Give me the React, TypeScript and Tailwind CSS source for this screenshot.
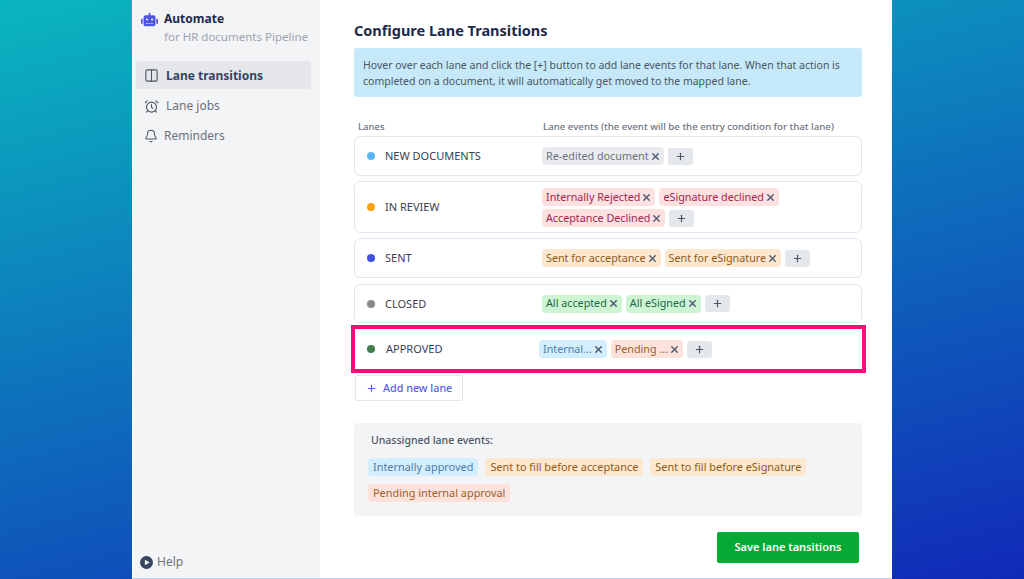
import React from 'react';
import { AlarmClock, Bell, Columns2, Plus, X } from 'lucide-react';
import { FaRobot } from 'react-icons/fa';

type Tag = { label: string; cls: string };

const gray = 'bg-[#e9ebef] text-[#6b7280]';
const red = 'bg-[#fde0e0] text-[#a0274f]';
const orange = 'bg-[#fde8cf] text-[#8e5a1a]';
const green = 'bg-[#cdf5d3] text-[#24664a]';
const blue = 'bg-[#d3eeff] text-[#4d7ea8]';
const peach = 'bg-[#fde2dc] text-[#9a5f2e]';

const lanes: { name: string; dot: string; h: string; pad?: string; tags: Tag[] }[] = [
  { name: 'NEW DOCUMENTS', dot: 'bg-[#5cb8f2]', h: 'h-[40px]', tags: [{ label: 'Re-edited document', cls: gray }] },
  {
    name: 'IN REVIEW',
    dot: 'bg-[#fba11b]',
    h: 'h-[52px]',
    pad: 'pt-[1px]',
    tags: [
      { label: 'Internally Rejected', cls: red },
      { label: 'eSignature declined', cls: red },
      { label: 'Acceptance Declined', cls: red },
    ],
  },
  {
    name: 'SENT',
    dot: 'bg-[#3f51e0]',
    h: 'h-[40px]',
    tags: [
      { label: 'Sent for acceptance', cls: orange },
      { label: 'Sent for eSignature', cls: orange },
    ],
  },
  {
    name: 'CLOSED',
    dot: 'bg-[#8a8a8a]',
    h: 'mt-[1px] h-[39px]',
    tags: [
      { label: 'All accepted', cls: green },
      { label: 'All eSigned', cls: green },
    ],
  },
];

const unassigned: Tag[] = [
  { label: 'Internally approved', cls: blue },
  { label: 'Sent to fill before acceptance', cls: orange },
  { label: 'Sent to fill before eSignature', cls: orange },
  { label: 'Pending internal approval', cls: peach },
];

const Chip = ({ tag }: { tag: Tag }) => (
  <span className={`inline-flex h-[18px] items-center rounded-[4px] pl-[4px] pr-[3px] text-[10.75px] leading-none ${tag.cls}`}>
    <span>{tag.label}</span>
    <X className="ml-[1px] h-[11px] w-[11px] text-[#4b5870]" strokeWidth={3} />
  </span>
);

const AddChip = () => (
  <span className="inline-flex h-[17px] w-[25px] items-center justify-center rounded-[3px] bg-[#e4e7eb] text-[#4b5563]">
    <Plus className="h-[11px] w-[11px]" strokeWidth={2.5} />
  </span>
);

export default function App() {
  return (
    <div
      className="flex h-[579px] w-[1024px] justify-center overflow-hidden bg-[linear-gradient(166deg,#0ab6bf,#1129b8)]"
      style={{ fontFamily: '"Noto Sans", sans-serif' }}
    >
      <div className="flex h-[579px] w-[760px] border-x border-b border-x-white/30 border-b-[#bcd0f5] bg-white">
        {/* Sidebar */}
        <aside className="flex w-[187px] flex-col bg-[#f3f4f6] px-[3px] pt-[10px]">
          <div className="pl-[5px]">
            <div className="flex items-center gap-[6px]">
              <FaRobot className="h-[15px] w-[17px] text-[#4f55e3]" />
              <span className="text-[12px] font-bold text-[#1e2a4a]">Automate</span>
            </div>
            <p className="pl-[23px] text-[11.5px] text-[#9ca3af]">for HR documents Pipeline</p>
          </div>
          <nav className="mt-[16px] flex flex-col">
            <div className="flex h-[28px] w-[175px] items-center gap-[7px] rounded-[3px] bg-[#e5e7eb] pt-[1px] pl-[8px] text-[12px] font-bold text-[#374462]">
              <Columns2 className="h-[15px] w-[15px] text-[#4b5563]" strokeWidth={1.75} />
              Lane transitions
            </div>
            <div className="mt-[2px] flex h-[30px] items-center gap-[7px] pl-[8px] text-[12px] text-[#6b7280]">
              <AlarmClock className="h-[15px] w-[15px] text-[#4b5563]" strokeWidth={1.75} />
              Lane jobs
            </div>
            <div className="flex h-[30px] items-center gap-[6px] pl-[8px] text-[12px] text-[#6b7280]">
              <Bell className="h-[14px] w-[14px] text-[#4b5563]" strokeWidth={1.75} />
              Reminders
            </div>
          </nav>
          <div className="mt-auto mb-[7px] flex items-center gap-[4px] pl-[4px] text-[12px] text-[#6b7280]">
            <svg viewBox="0 0 16 16" className="h-[13px] w-[13px]">
              <circle cx="8" cy="8" r="8" fill="#374462" />
              <path d="M6 4.5 L12 8 L6 11.5 Z" fill="#f3f4f6" />
            </svg>
            Help
          </div>
        </aside>

        {/* Main */}
        <main className="flex w-[571px] flex-col pt-[19px] pr-[29px] pl-[34px]">
          <h1 className="text-[14.5px] leading-[22px] font-bold text-[#1e2a4a]">Configure Lane Transitions</h1>
          <div className="mt-[7px] h-[49px] rounded-[3px] bg-[#c5e9f8] px-[9px] pt-[9px] text-[10.5px] leading-[16px] text-[#4b5563]">
            Hover over each lane and click the [+] button to add lane events for that lane. When that action is completed on a document, it will automatically get moved to the mapped lane.
          </div>

          <div className="mt-[23px] mb-[1px] flex h-[15px] items-center font-medium text-[#6b7280]">
            <span className="w-[189px] pl-[4px] text-[9.5px]">Lanes</span>
            <span className="text-[9.7px]">Lane events (the event will be the entry condition for that lane)</span>
          </div>

          <div className="flex flex-col gap-[5px]">
            {lanes.map((lane) => (
              <div key={lane.name} className={`flex ${lane.h} items-center rounded-[6px] border border-[#e2e6f0] bg-white`}>
                <span className={`ml-[12px] h-[8px] w-[8px] rounded-full ${lane.dot}`} />
                <span className="ml-[10px] w-[157px] pt-[1px] text-[11px] text-[#374151]">{lane.name}</span>
                <div className={`flex w-[310px] flex-wrap items-center gap-x-[4px] gap-y-[3px] ${lane.pad ?? ''}`}>
                  {lane.tags.map((t) => (
                    <Chip key={t.label} tag={t} />
                  ))}
                  <AddChip />
                </div>
              </div>
            ))}
          </div>

          {/* Highlighted lane */}
          <div className="-ml-[3px] -mr-[4px] mt-[2px] flex h-[48px] shrink-0 items-center border-[4px] border-[#ff0a78] bg-white">
            <span className="ml-[12px] h-[8px] w-[8px] rounded-full bg-[#3f7d4e]" />
            <span className="ml-[11px] w-[153px] pt-[1px] text-[11px] text-[#374151]">APPROVED</span>
            <div className="flex items-center gap-[4px]">
              <Chip tag={{ label: 'Internal...', cls: blue }} />
              <Chip tag={{ label: 'Pending ...', cls: peach }} />
              <AddChip />
            </div>
          </div>

          <button className="mt-[2px] ml-[1px] flex h-[26px] w-[108px] shrink-0 items-center gap-[6px] rounded-[2px] border border-[#e2e6f0] bg-white pl-[10px] text-[10.75px] font-medium text-[#5a5fe6]">
            <Plus className="h-[11px] w-[11px]" strokeWidth={2.5} />
            Add new lane
          </button>

          <div className="mt-[22px] h-[93px] shrink-0 rounded-[4px] bg-[#f3f4f6] px-[14px] pt-[10px]">
            <p className="pl-[3px] text-[10.5px] leading-[14px] font-medium text-[#4b5563]">Unassigned lane events:</p>
            <div className="mt-[11px] flex flex-wrap gap-x-[7px] gap-y-[8px]">
              {unassigned.map((t) => (
                <span key={t.label} className={`inline-flex h-[18px] items-center rounded-[4px] px-[5px] text-[10.9px] leading-none ${t.cls}`}>
                  {t.label}
                </span>
              ))}
            </div>
          </div>

          <div className="mt-[16px] flex justify-end pr-[3px]">
            <button className="h-[31px] w-[142px] rounded-[2px] bg-[#05a935] text-[11px] font-semibold text-white">
              Save lane tansitions
            </button>
          </div>
        </main>
      </div>
    </div>
  );
}
